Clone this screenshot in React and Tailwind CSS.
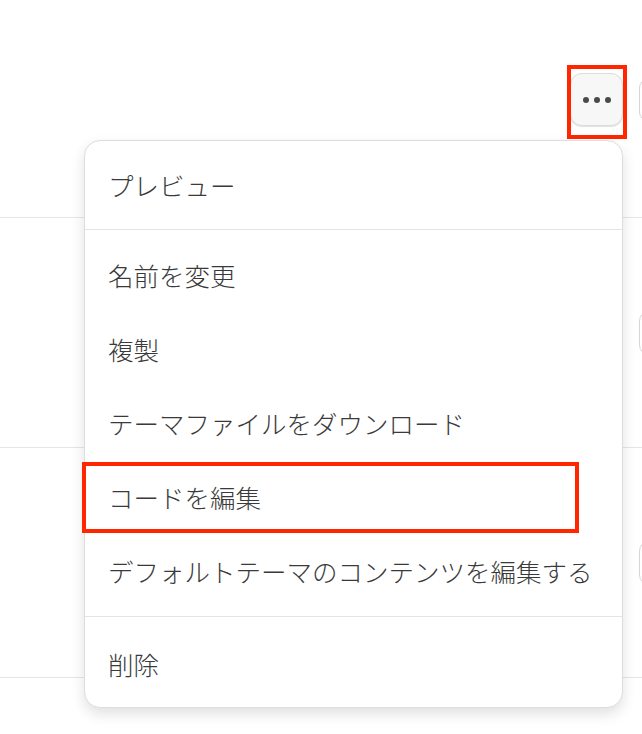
import React from "react";

const font = { fontFamily: '"Noto Sans CJK JP", "Noto Sans", sans-serif' };

function PartialButton() {
  return (
    <div className="h-[44px] w-[120px] shrink-0 rounded-[10px] border border-[#d6d6d6] bg-white" />
  );
}

function Row({ children, first }) {
  return (
    <div
      className={
        "flex h-[230px] items-center justify-end gap-[16px] border-b border-[#e6e6e6] pr-0 " +
        (first ? "mt-[-12px]" : "")
      }
    >
      {children}
    </div>
  );
}

function MenuItem({ children }) {
  return (
    <div className="flex h-[74px] items-center whitespace-nowrap px-[23px] text-[25.5px] font-light leading-none text-[#3a3a3a]">
      {children}
    </div>
  );
}

export default function App() {
  return (
    <div className="relative h-[734px] w-[642px] overflow-hidden bg-white" style={font}>
      <div className="mr-[-117px]">
        <Row first>
          <div className="relative mt-[-6px]">
            <button className="flex h-[53px] w-[53px] items-center justify-center gap-[5px] rounded-[12px] border border-[#dcdcdc] bg-[#f7f7f7] shadow-[0_1px_1px_rgba(0,0,0,0.12)]">
              <span className="h-[6px] w-[6px] rounded-full bg-[#4a4a4a]" />
              <span className="h-[6px] w-[6px] rounded-full bg-[#4a4a4a]" />
              <span className="h-[6px] w-[6px] rounded-full bg-[#4a4a4a]" />
            </button>
            <div className="pointer-events-none absolute left-[-3px] top-[-8px] h-[74px] w-[60px] border-[4px] border-[#ff2600]" />
          </div>
          <div className="mt-[-6px]">
            <PartialButton />
          </div>
        </Row>
        <Row>
          <PartialButton />
        </Row>
        <Row>
          <PartialButton />
        </Row>
        <Row>
          <PartialButton />
        </Row>
      </div>

      <div className="absolute left-[84px] top-[140px] w-[539px] rounded-[16px] border border-[#dddddd] bg-white shadow-[0_6px_14px_rgba(0,0,0,0.12)]">
        <div className="py-[7px]">
          <MenuItem>プレビュー</MenuItem>
        </div>
        <div className="border-t border-[#e4e4e4] py-[8px]">
          <MenuItem>名前を変更</MenuItem>
          <MenuItem>複製</MenuItem>
          <MenuItem>テーマファイルをダウンロード</MenuItem>
          <div className="relative">
            <MenuItem>コードを編集</MenuItem>
            <div className="pointer-events-none absolute left-[-3px] top-[2px] h-[71px] w-[497px] border-[4px] border-[#ff2600]" />
          </div>
          <MenuItem>デフォルトテーマのコンテンツを編集する</MenuItem>
        </div>
        <div className="border-t border-[#e4e4e4] pb-[6px] pt-[10px]">
          <MenuItem>削除</MenuItem>
        </div>
      </div>
    </div>
  );
}
